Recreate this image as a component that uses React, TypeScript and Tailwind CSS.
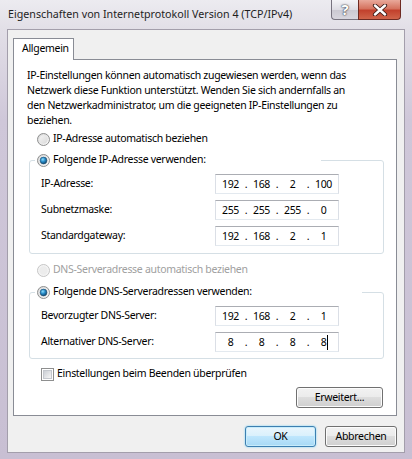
import React from "react";

type RadioProps = { checked?: boolean; disabled?: boolean };

const Radio = ({ checked, disabled }: RadioProps) => (
  <svg width="13" height="13" viewBox="0 0 13 13" className="shrink-0">
    <defs>
      <linearGradient id="rOuter" x1="0" y1="0" x2="1" y2="1">
        <stop offset="0" stopColor="#d6d6d6" />
        <stop offset="1" stopColor="#fbfbfb" />
      </linearGradient>
      <linearGradient id="rInner" x1="0" y1="0" x2="1" y2="1">
        <stop offset="0" stopColor="#f4f4f4" />
        <stop offset="1" stopColor="#d9d9d9" />
      </linearGradient>
      <radialGradient id="rDot" cx="0.4" cy="0.35" r="0.7">
        <stop offset="0" stopColor="#8fdcfa" />
        <stop offset="0.45" stopColor="#2a8fcc" />
        <stop offset="1" stopColor="#0c3f64" />
      </radialGradient>
    </defs>
    <circle
      cx="6.5"
      cy="6.5"
      r="6"
      fill={disabled ? "#f4f4f4" : "url(#rOuter)"}
      stroke={disabled ? "#c5c5c5" : "#8e8f8f"}
    />
    <circle cx="6.5" cy="6.5" r="4.2" fill={disabled ? "#ececec" : "url(#rInner)"} />
    {checked && <circle cx="6.5" cy="6.5" r="3.4" fill="url(#rDot)" stroke="#1c4f73" strokeWidth="0.6" />}
  </svg>
);

const Checkbox = () => (
  <span className="flex h-[13px] w-[13px] shrink-0 items-center justify-center border border-[#8e8f8f] bg-white">
    <span className="h-[9px] w-[9px] border border-[#c4c8ce] bg-[linear-gradient(135deg,#cbcfd5,#f6f6f6)]" />
  </span>
);

type IpProps = { parts: string[]; caret?: boolean };

const IpField = ({ parts, caret }: IpProps) => (
  <div className="grid h-[20px] w-[124px] grid-cols-[27px_4px_27px_4px_27px_4px_27px] items-center border border-[#abadb3] border-x-[#dbdfe6] border-b-[#e3e9ef] bg-white pl-[1px] leading-[18px]">
    {parts.map((p, i) => (
      <React.Fragment key={i}>
        {i > 0 && <span className="text-center">.</span>}
        <span className="flex justify-center">
          <span className="relative">
            {p}
            {caret && i === parts.length - 1 && (
              <span className="absolute -right-[2px] top-[2px] h-[15px] w-px bg-black" />
            )}
          </span>
        </span>
      </React.Fragment>
    ))}
  </div>
);

const FieldRow = ({ label, parts, caret }: { label: string; parts: string[]; caret?: boolean }) => (
  <div className="flex h-[20px] items-center">
    <span className="w-[174px]">{label}</span>
    <IpField parts={parts} caret={caret} />
  </div>
);

const Button = ({ children, primary, className }: { children: React.ReactNode; primary?: boolean; className?: string }) => (
  <button
    className={
      (primary
        ? "border-[#3c7fb1] bg-[linear-gradient(#eaf6fd_0%,#d9f0fc_49%,#bee6fd_50%,#a7d9f5_100%)] shadow-[inset_0_0_0_1px_#c8ecfb,0_0_2px_#6ccff7] "
        : "border-[#707070] bg-[linear-gradient(#f2f2f2_0%,#ebebeb_49%,#dddddd_50%,#cfcfcf_100%)] shadow-[inset_0_0_0_1px_#fcfcfc] ") +
      "flex h-[21px] items-center justify-center rounded-[3px] border leading-none " +
      (className ?? "")
    }
  >
    {children}
  </button>
);

export default function App() {
  return (
    <div className="flex h-[459px] w-[412px] flex-col bg-[linear-gradient(#ecebf0_0px,#e2dfe7_29px,#cfc7d9_120px,#c8bfd3_459px)] font-['Noto_Sans',sans-serif] text-[10.5px] tracking-[-0.3px] text-black">
      {/* title bar */}
      <div className="flex h-[29px] shrink-0 items-start">
        <span className="whitespace-nowrap pl-[8px] pt-[6px] text-[10.7px] leading-[17px] tracking-normal text-[#1e1e1e]">
          Eigenschaften von Internetprotokoll Version 4 (TCP/IPv4)
        </span>
        <div className="ml-auto mr-[11px] flex">
          <div className="flex h-[20px] w-[27px] items-center justify-center rounded-bl-[4px] border border-t-0 border-r-0 border-[#77737f] bg-[linear-gradient(#f4f4f7,#dedde4_50%,#cac8d1_51%,#d8d6de)] text-[15px] font-bold leading-none text-white [text-shadow:0_0_1px_#2f2f3a,0_0_2px_#2f2f3a]">
            ?
          </div>
          <div className="flex h-[20px] w-[43px] items-center justify-center rounded-br-[4px] border border-t-0 border-[#6e2a22] bg-[linear-gradient(#e9a99b,#d5735f_45%,#c2412d_55%,#d0644a)]">
            <svg width="16" height="12" viewBox="0 0 16 12">
              <path d="M3 1.5 L13 10.5 M13 1.5 L3 10.5" stroke="#3b1a16" strokeWidth="4.2" strokeLinecap="round" />
              <path d="M3 1.5 L13 10.5 M13 1.5 L3 10.5" stroke="#ffffff" strokeWidth="2.4" strokeLinecap="round" />
            </svg>
          </div>
        </div>
      </div>

      {/* client area */}
      <div className="mx-[7px] flex h-[424px] shrink-0 flex-col border border-[#a39eab] bg-[#f0f0f0] pl-[5px] pr-[7px] pt-[8px]">
        <div className="relative z-10 -mb-px flex h-[22px] w-[61px] items-center border border-b-0 border-[#898c95] bg-white pl-[8px] pb-[1px]">
          Allgemein
        </div>
        <div className="flex h-[357px] w-[384px] flex-col border border-[#898c95] bg-white">
          <p className="ml-[13px] mt-[8px] whitespace-nowrap leading-[15px]">
            IP-Einstellungen können automatisch zugewiesen werden, wenn das
            <br />
            Netzwerk diese Funktion unterstützt. Wenden Sie sich andernfalls an
            <br />
            den Netzwerkadministrator, um die geeigneten IP-Einstellungen zu
            <br />
            beziehen.
          </p>

          <div className="ml-[23px] mt-[3px] flex h-[16px] items-center gap-[3px]">
            <Radio />
            <span>IP-Adresse automatisch beziehen</span>
          </div>

          <fieldset className="ml-[15px] mt-[5px] w-[355px] rounded-[3px] border border-[#d5dfe5]">
            <legend className="ml-[5px] flex h-[16px] w-[286px] items-center gap-[3px] pl-[2px]">
              <Radio checked />
              <span>Folgende IP-Adresse verwenden:</span>
            </legend>
            <div className="flex flex-col gap-[6px] pb-[7px] pl-[11px] pt-[6px]">
              <FieldRow label="IP-Adresse:" parts={["192", "168", "2", "100"]} />
              <FieldRow label="Subnetzmaske:" parts={["255", "255", "255", "0"]} />
              <FieldRow label="Standardgateway:" parts={["192", "168", "2", "1"]} />
            </div>
          </fieldset>

          <div className="ml-[23px] mt-[8px] flex h-[16px] items-center gap-[3px] text-[#a0a0a0]">
            <Radio disabled />
            <span>DNS-Serveradresse automatisch beziehen</span>
          </div>

          <fieldset className="ml-[15px] mt-[6px] w-[355px] rounded-[3px] border border-[#d5dfe5]">
            <legend className="ml-[5px] flex h-[16px] w-[327px] items-center gap-[3px] pl-[2px]">
              <Radio checked />
              <span>Folgende DNS-Serveradressen verwenden:</span>
            </legend>
            <div className="flex flex-col gap-[6px] pb-[6px] pl-[11px] pt-[6px]">
              <FieldRow label="Bevorzugter DNS-Server:" parts={["192", "168", "2", "1"]} />
              <FieldRow label="Alternativer DNS-Server:" parts={["8", "8", "8", "8"]} caret />
            </div>
          </fieldset>

          <div className="ml-[27px] mt-[7px] flex h-[16px] items-center gap-[3px]">
            <Checkbox />
            <span>Einstellungen beim Beenden überprüfen</span>
          </div>

          <Button className="mr-[13px] mt-[5px] w-[87px] self-end">Erweitert...</Button>
        </div>

        <div className="mt-[10px] flex justify-end gap-[9px]">
          <Button primary className="w-[71px]">
            OK
          </Button>
          <Button className="w-[72px]">Abbrechen</Button>
        </div>
      </div>
    </div>
  );
}
